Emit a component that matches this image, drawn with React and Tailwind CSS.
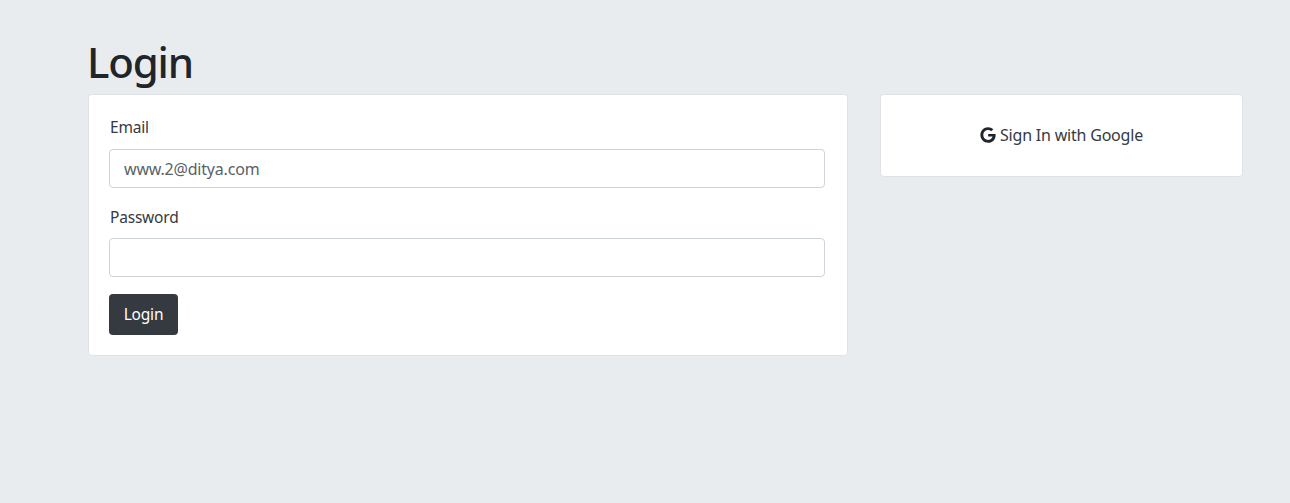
import React from "react";
import { FaGoogle } from "react-icons/fa";

function App() {
  return (
    <div className="min-h-screen bg-[#e9ecef] pl-[88px] pr-[47px] pt-[38px] font-['Noto_Sans','Open_Sans',sans-serif] text-[#212529]">
      <h1 className="text-[42px] leading-[48px] font-medium tracking-[-1.2px] -ml-[1px] mb-[8px]">Login</h1>
      <div className="flex items-start gap-[32px]">
        <div className="w-[760px] bg-white border border-[#dfe2e6] rounded-[4px] pl-[20px] pr-[22px] py-[20px]">
          <div className="mb-[17px]">
            <label className="block text-[15.5px] leading-[24px] mb-[10px] pl-[1px] tracking-[-0.2px] text-[#343a40]">Email</label>
            <input
              type="text"
              defaultValue="www.2@ditya.com"
              className="block w-full h-[39px] px-[14px] text-[16px] text-[#5a6268] tracking-[-0.2px] bg-white border border-[#ced4da] rounded-[4px] outline-none"
            />
          </div>
          <div className="mb-[17px]">
            <label className="block text-[15.5px] leading-[24px] mb-[9px] pl-[1px] tracking-[-0.2px] text-[#343a40]">Password</label>
            <input
              type="password"
              className="block w-full h-[39px] px-[14px] text-[16px] text-[#495057] bg-white border border-[#ced4da] rounded-[4px] outline-none"
            />
          </div>
          <button className="block w-[69px] h-[41px] bg-[#343a40] text-white text-[15.5px] tracking-[-0.2px] rounded-[4px]">
            Login
          </button>
        </div>
        <div className="flex-1 h-[83px] bg-white border border-[#dfe2e6] rounded-[4px] flex items-center justify-center">
          <a className="flex items-center gap-[4px] text-[16px] tracking-[-0.2px] text-[#343a40] -mt-[2px]">
            <FaGoogle className="w-[16px] h-[16px] text-[#212529]" />
            Sign In with Google
          </a>
        </div>
      </div>
    </div>
  );
}

export default App;
